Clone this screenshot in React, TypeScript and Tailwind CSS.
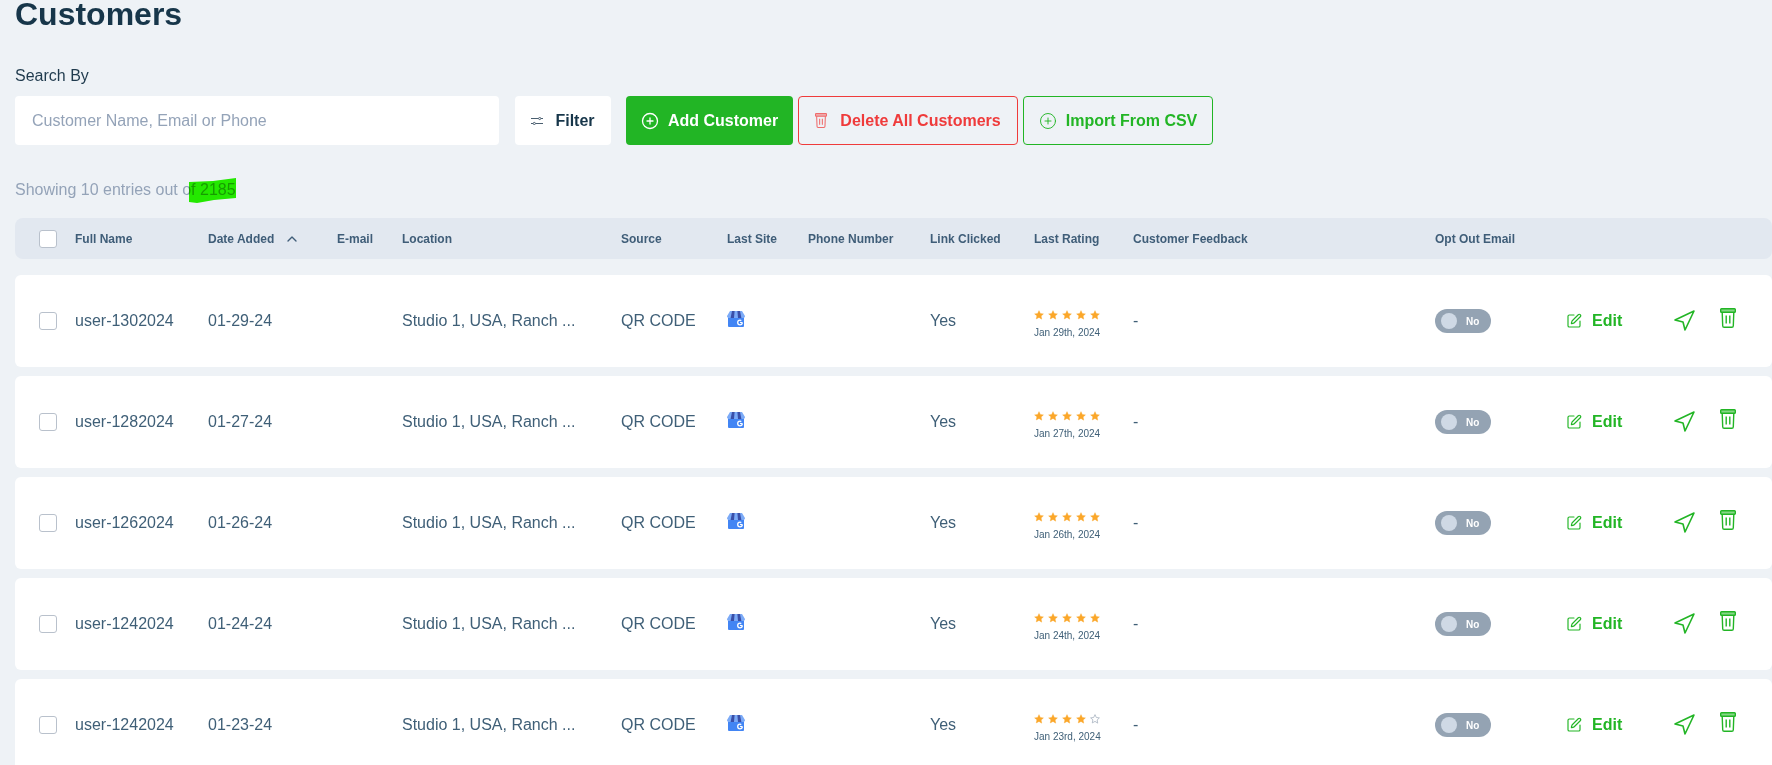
import React from 'react';
import { ChevronUp, CirclePlus, Navigation, SquarePen } from 'lucide-react';

const gridCols =
  'grid grid-cols-[36px_133px_129px_65px_219px_106px_81px_122px_104px_99px_302px_131px_108px_46px_1fr] items-center pl-6';

const customers = [
  { name: 'user-1302024', added: '01-29-24', rated: 'Jan 29th, 2024', stars: 5 },
  { name: 'user-1282024', added: '01-27-24', rated: 'Jan 27th, 2024', stars: 5 },
  { name: 'user-1262024', added: '01-26-24', rated: 'Jan 26th, 2024', stars: 5 },
  { name: 'user-1242024', added: '01-24-24', rated: 'Jan 24th, 2024', stars: 5 },
  { name: 'user-1242024', added: '01-23-24', rated: 'Jan 23rd, 2024', stars: 4 },
];

const Checkbox: React.FC = () => (
  <span className="block w-[18px] h-[18px] rounded-[3px] bg-white border border-[#b9c1cc]" />
);

const Star: React.FC<{ filled: boolean }> = ({ filled }) => (
  <svg viewBox="0 0 24 24" className="w-[10px] h-[10px]">
    <path
      d="M12 1.5l3.2 6.900 7.300.900-5.400 5.100 1.400 7.500L12 17.700l-6.500 3.700 1.400-7.500L1.500 9.300l7.300-.900z"
      fill={filled ? '#fba72a' : 'none'}
      stroke={filled ? '#fba72a' : '#aab4c2'}
      strokeWidth={filled ? 1 : 2}
    />
  </svg>
);

const TrashIcon: React.FC<{ className?: string }> = ({ className }) => (
  <svg viewBox="0 0 16 20" className={className} fill="none" stroke="currentColor" strokeWidth="1.4">
    <rect x="0.700" y="0.700" width="14.600" height="3.600" rx="0.800" fill="currentColor" fillOpacity="0.55" />
    <path d="M2.200 4.300l.5 13.400c0 .9.6 1.600 1.500 1.600h7.600c.9 0 1.500-.7 1.500-1.600l.5-13.400" />
    <path d="M6.200 7.500v8M9.800 7.500v8" />
  </svg>
);

const FilterIcon: React.FC = () => (
  <svg viewBox="0 0 12 8" className="w-3 h-2 text-[#4b5f70]" fill="none" stroke="currentColor" strokeWidth="1">
    <path d="M0 1.500h7.500M10 1.500h2M0 6.500h2M4.500 6.500H12" />
    <circle cx="8.700" cy="1.500" r="1.100" />
    <circle cx="3.300" cy="6.500" r="1.100" />
  </svg>
);

const GoogleBusinessIcon: React.FC = () => (
  <svg viewBox="0 0 18 16" className="w-[18px] h-4">
    <rect x="1" y="5" width="16" height="11" rx="1" fill="#4285f4" />
    <path d="M3 0h12l3 5c0 1.400-1.100 2-2.200 2H2.200C1.100 7 0 6.400 0 5z" fill="#7baaf7" />
    <path d="M5 0h2.600L7 7H3.600zM10.400 0H13l1.400 7H11z" fill="#3a4fa8" />
    <circle cx="13" cy="11.500" r="2.300" fill="none" stroke="#fff" strokeWidth="1.300" strokeDasharray="11 3" />
    <path d="M13 11.500h2.300" stroke="#fff" strokeWidth="1.100" />
  </svg>
);

const CustomerRow: React.FC<{ customer: (typeof customers)[number] }> = ({ customer }) => (
  <div className={`${gridCols} h-[92px] shrink-0 bg-white rounded-md text-base text-[#3f5f77]`}>
    <Checkbox />
    <span>{customer.name}</span>
    <span>{customer.added}</span>
    <span />
    <span>Studio 1, USA, Ranch ...</span>
    <span>QR CODE</span>
    <span className="-mt-[5px]">
      <GoogleBusinessIcon />
    </span>
    <span />
    <span>Yes</span>
    <div className="flex flex-col gap-[7px] pt-[7px]">
      <div className="flex gap-1">
        {[1, 2, 3, 4, 5].map((n) => (
          <Star key={n} filled={n <= customer.stars} />
        ))}
      </div>
      <span className="text-[10px] leading-3">{customer.rated}</span>
    </div>
    <span>-</span>
    <div className="flex items-center w-14 h-6 rounded-full bg-[#94a3b3] pl-[6px]">
      <span className="w-4 h-4 rounded-full bg-[#cfd9e5]" />
      <span className="ml-[9px] text-[10px] font-bold text-white">No</span>
    </div>
    <div className="flex items-center gap-[10px] font-bold text-[#22b525]">
      <SquarePen className="w-4 h-4" strokeWidth={1.75} />
      Edit
    </div>
    <Navigation className="w-6 h-6 -ml-[2px] -mt-[1px] text-[#22b525]" strokeWidth={1.6} />
    <TrashIcon className="w-4 h-5 -mt-[6px] text-[#22b525]" />
  </div>
);

const App: React.FC = () => {
  return (
    <div className="h-[765px] overflow-hidden bg-[#eef2f6] pl-[15px] font-['Liberation_Sans',Arial,sans-serif]">
      <h1 className="text-[32px] leading-[28px] font-bold text-[#17364a]">Customers</h1>

      <div className="mt-9 text-base leading-6 text-[#1f3a4d]">Search By</div>

      <div className="flex items-center mt-2 h-[49px]">
        <div className="flex items-center w-[484px] h-full pl-[17px] bg-white rounded-[4px] text-base text-[#94a3b8]">
          Customer Name, Email or Phone
        </div>
        <button className="flex items-center justify-center gap-3 ml-4 w-[96px] h-full bg-white rounded-[4px] text-base font-bold text-[#17364a]">
          <FilterIcon />
          Filter
        </button>
        <button className="flex items-center justify-center gap-[9px] ml-[15px] w-[167px] h-full bg-[#22b525] rounded-[4px] text-base font-bold text-white">
          <CirclePlus className="w-[18px] h-[18px]" strokeWidth={1.75} />
          Add Customer
        </button>
        <button className="flex items-center justify-center gap-[13px] ml-[5px] w-[220px] h-full border border-[#ef3b3b] rounded-[4px] text-base font-bold text-[#ef3b3b]">
          <TrashIcon className="w-3 h-[15px] text-[#ef6b6b]" />
          Delete All Customers
        </button>
        <button className="flex items-center justify-center gap-[9px] ml-[5px] w-[190px] h-full border border-[#22b525] rounded-[4px] text-base font-bold text-[#22b525]">
          <CirclePlus className="w-[18px] h-[18px]" strokeWidth={1.25} />
          Import From CSV
        </button>
      </div>

      <div className="relative mt-[33px] w-fit text-base leading-6 text-[#94a3b8]">
        Showing 10 entries out of 2185
        <svg viewBox="0 0 47 25" className="absolute left-[174px] top-0 w-[47px] h-[25px] mix-blend-multiply">
          <path d="M0 4L24 3 47 0V20L25 22 8 25 0 24z" fill="#26f500" />
        </svg>
      </div>

      <div className={`${gridCols} mt-4 h-[41px] bg-[#e2e8f0] rounded-lg text-xs font-bold text-[#3f5d78]`}>
        <Checkbox />
        <span>Full Name</span>
        <span className="flex items-center gap-[10px]">
          Date Added
          <ChevronUp className="w-4 h-4" strokeWidth={2} />
        </span>
        <span>E-mail</span>
        <span>Location</span>
        <span>Source</span>
        <span>Last Site</span>
        <span>Phone Number</span>
        <span>Link Clicked</span>
        <span>Last Rating</span>
        <span>Customer Feedback</span>
        <span>Opt Out Email</span>
      </div>

      <div className="flex flex-col gap-[9px] mt-4">
        {customers.map((customer) => (
          <CustomerRow key={customer.added} customer={customer} />
        ))}
      </div>
    </div>
  );
};

export default App;
